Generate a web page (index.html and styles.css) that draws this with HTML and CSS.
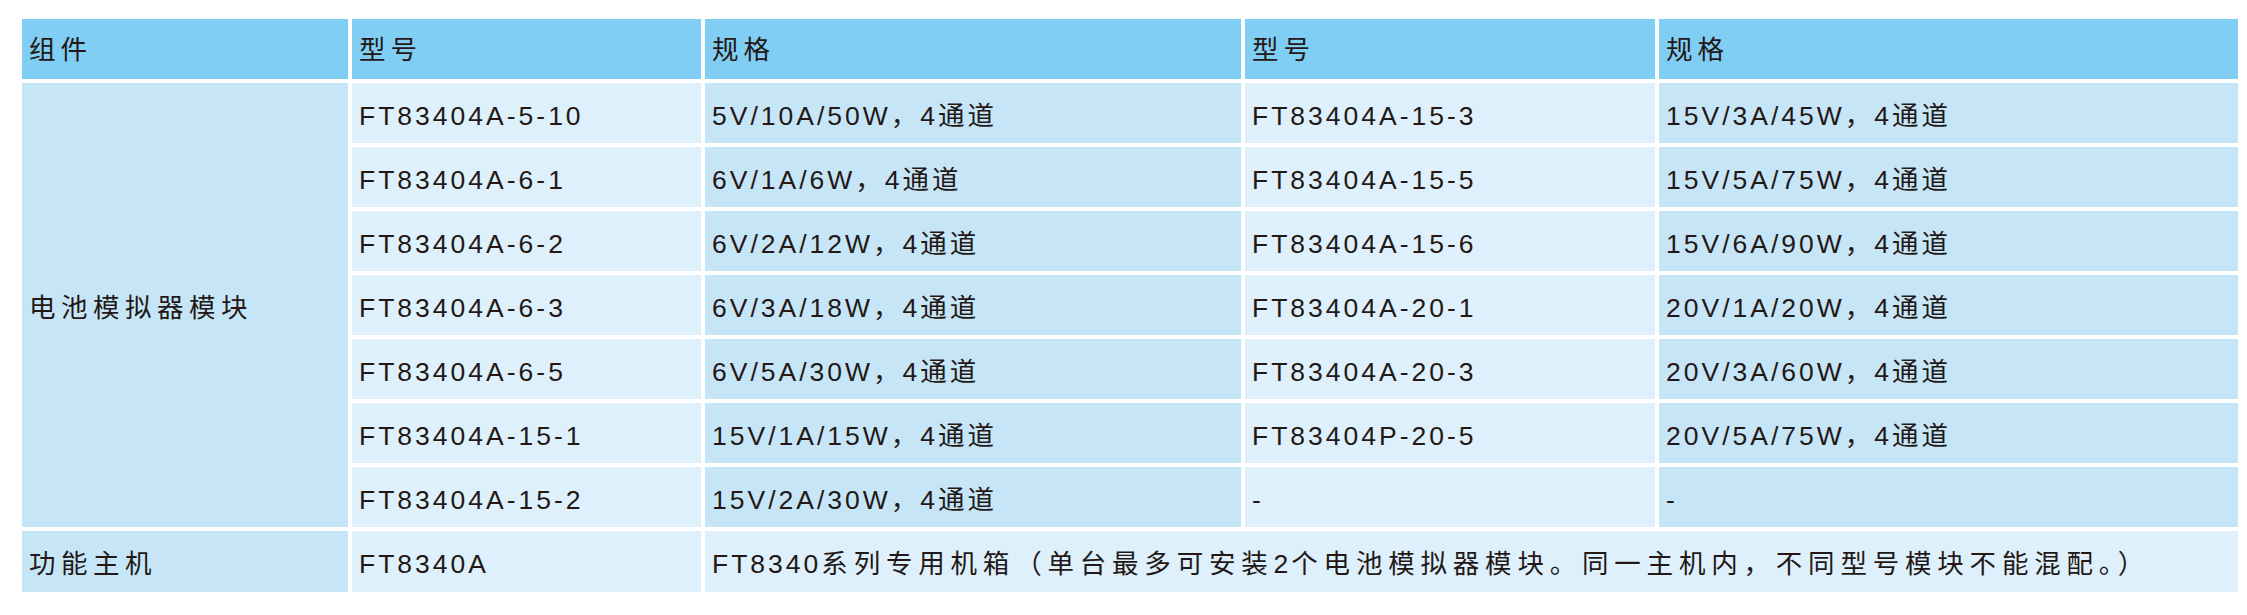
FILE: index.html
```html
<!DOCTYPE html>
<html lang="zh-CN">
<head>
<meta charset="utf-8">
<title>FT8340 组件</title>
<link rel="stylesheet" href="styles.css">
</head>
<body>
<table class="spec">
  <colgroup>
    <col class="c-part"><col class="c-model"><col class="c-spec"><col class="c-model2"><col class="c-spec2">
  </colgroup>
  <thead>
    <tr><th>组件</th><th>型号</th><th>规格</th><th>型号</th><th>规格</th></tr>
  </thead>
  <tbody>
    <tr>
      <td class="dark part" rowspan="7">电池模拟器模块</td>
      <td class="light">FT83404A-5-10</td><td class="dark">5V/10A/50W，4通道</td>
      <td class="light">FT83404A-15-3</td><td class="dark">15V/3A/45W，4通道</td>
    </tr>
    <tr>
      <td class="light">FT83404A-6-1</td><td class="dark">6V/1A/6W，4通道</td>
      <td class="light">FT83404A-15-5</td><td class="dark">15V/5A/75W，4通道</td>
    </tr>
    <tr>
      <td class="light">FT83404A-6-2</td><td class="dark">6V/2A/12W，4通道</td>
      <td class="light">FT83404A-15-6</td><td class="dark">15V/6A/90W，4通道</td>
    </tr>
    <tr>
      <td class="light">FT83404A-6-3</td><td class="dark">6V/3A/18W，4通道</td>
      <td class="light">FT83404A-20-1</td><td class="dark">20V/1A/20W，4通道</td>
    </tr>
    <tr>
      <td class="light">FT83404A-6-5</td><td class="dark">6V/5A/30W，4通道</td>
      <td class="light">FT83404A-20-3</td><td class="dark">20V/3A/60W，4通道</td>
    </tr>
    <tr>
      <td class="light">FT83404A-15-1</td><td class="dark">15V/1A/15W，4通道</td>
      <td class="light">FT83404P-20-5</td><td class="dark">20V/5A/75W，4通道</td>
    </tr>
    <tr>
      <td class="light">FT83404A-15-2</td><td class="dark">15V/2A/30W，4通道</td>
      <td class="light">-</td><td class="dark">-</td>
    </tr>
    <tr class="last">
      <td class="dark part">功能主机</td>
      <td class="light">FT8340A</td>
      <td class="light" colspan="3">FT8340<span class="cn">系列专用机箱（单台最多可安装</span>2<span class="cn">个电池模拟器模块。同一主机内，不同型号模块不能混配。）</span></td>
    </tr>
  </tbody>
</table>
</body>
</html>
```

FILE: styles.css
```css
html, body {
  margin: 0;
  padding: 0;
  background: #ffffff;
}

.spec {
  margin: 15px 0 0 18px;
  width: 2224px;
  table-layout: fixed;
  border-collapse: separate;
  border-spacing: 4px;
  font-family: "Liberation Sans Narrow", "Liberation Sans", "Noto Sans CJK SC", sans-serif;
  font-size: 26.5px;
  letter-spacing: 3px;
  color: #231815;
}

.c-part { width: 326px; }
.c-model { width: 349px; }
.c-spec { width: 536px; }
.c-model2 { width: 410px; }
.c-spec2 { width: 579px; }

.spec th,
.spec td {
  height: 60px;
  padding: 5px 6px 0 7px;
  box-sizing: border-box;
  text-align: left;
  vertical-align: middle;
  font-weight: normal;
  white-space: nowrap;
  line-height: 30px;
}

.spec th {
  background: #80cef4;
  padding-top: 2px;
  letter-spacing: 5px;
}

.spec td.part { letter-spacing: 5.5px; }

.cn { letter-spacing: 5.8px; }

.spec td.dark { background: #c6e6f8; }
.spec td.light { background: #def0fb; }

.spec tr.last td { height: 61px; }
```
